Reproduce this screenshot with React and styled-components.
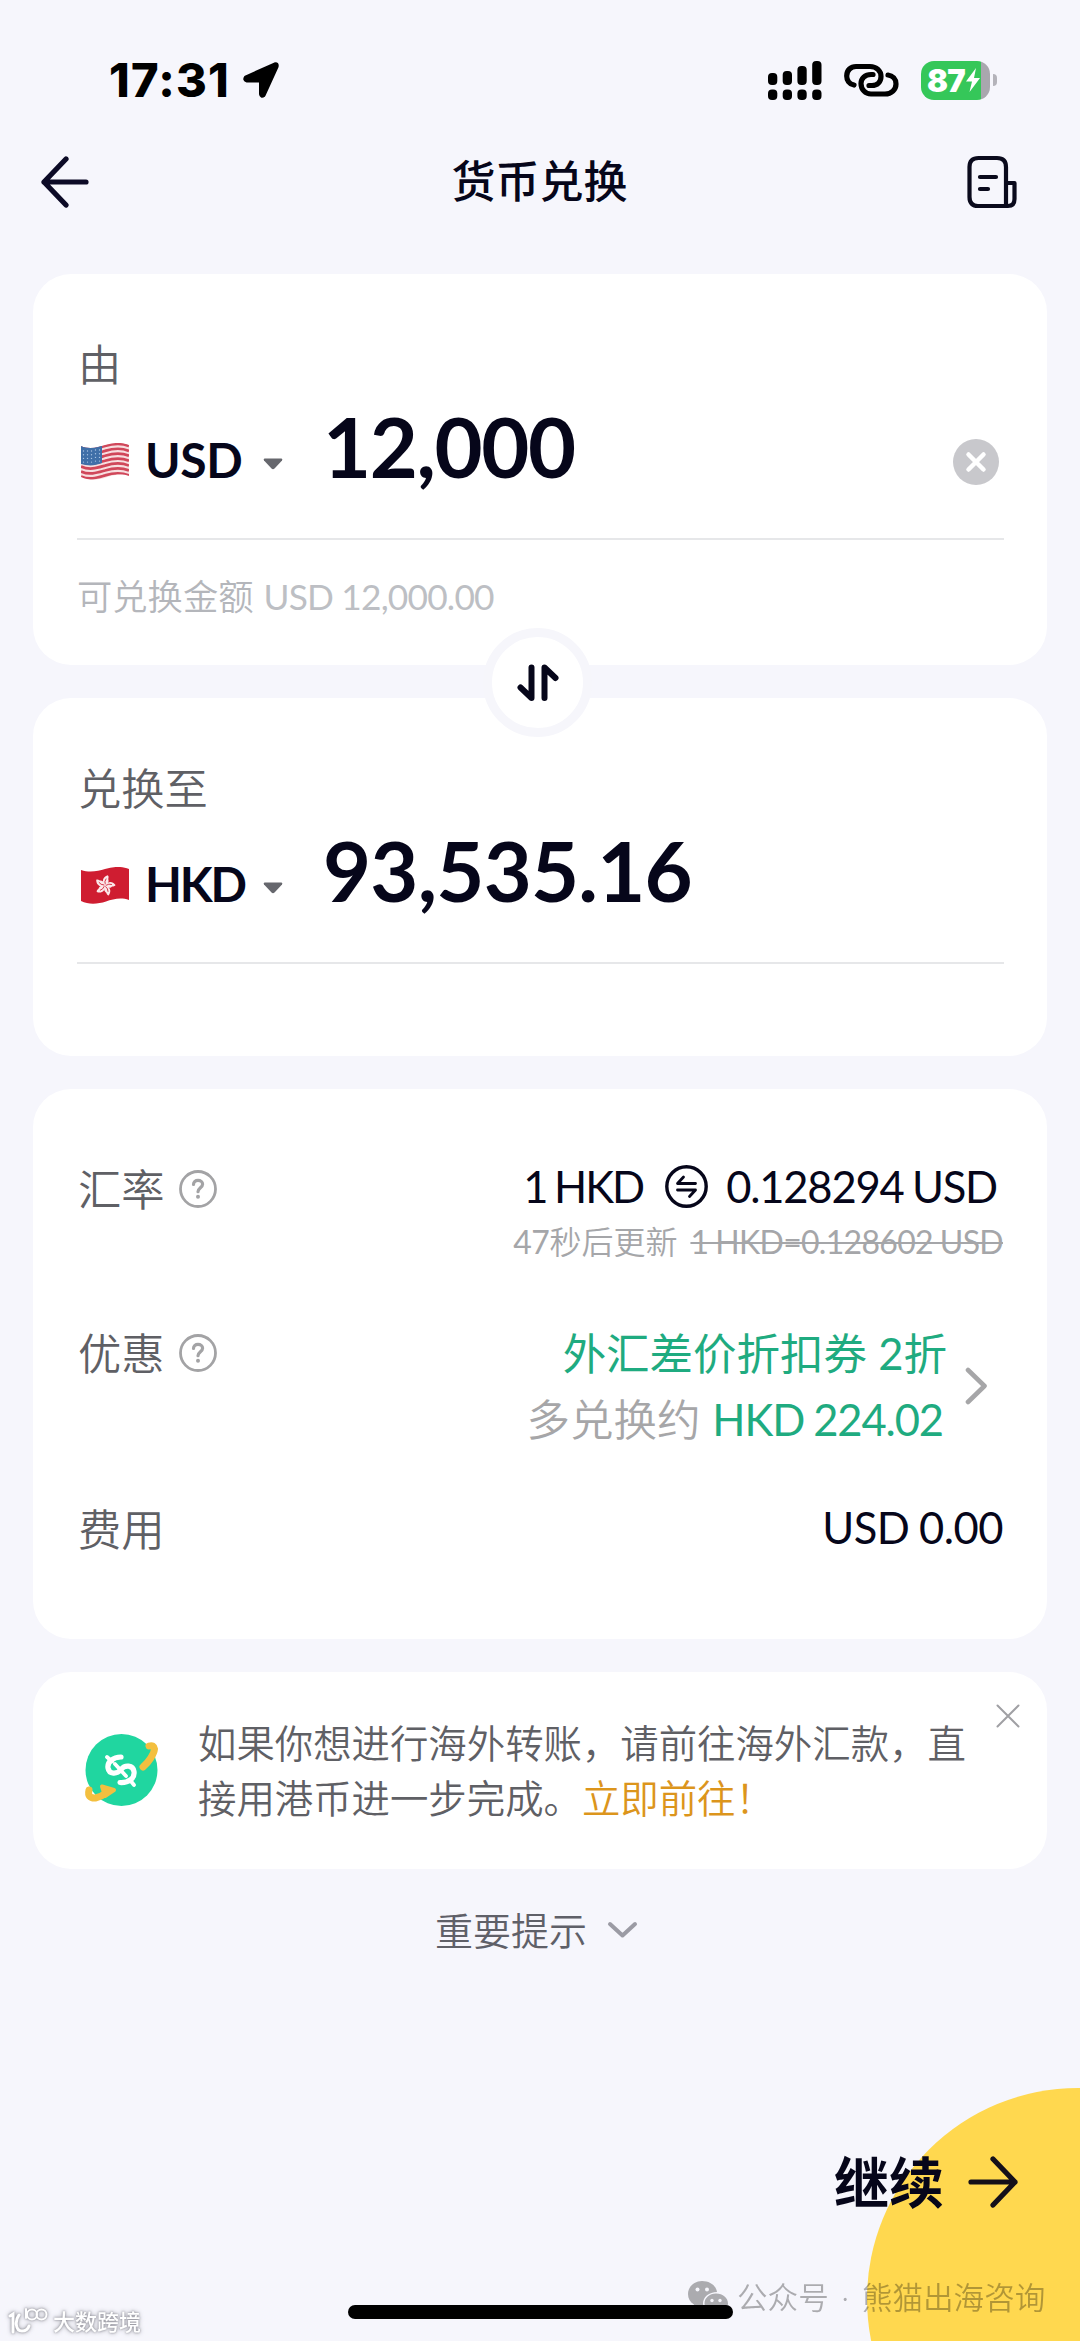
import React from 'react'
import styled, { createGlobalStyle } from 'styled-components'

const GlobalStyle = createGlobalStyle`
  * {
    box-sizing: border-box;
  }
  body {
    margin: 0;
    background: #f6f6fc;
    font-family: Lato, "Noto Sans CJK SC", sans-serif;
    color: #06061a;
  }
  svg {
    display: block;
    flex: none;
  }
`

const Screen = styled.div`
  position: relative;
  display: flex;
  flex-direction: column;
  width: 1080px;
  height: 2341px;
  overflow: hidden;
  background: #f6f6fc;
`

const StatusBar = styled.div`
  display: flex;
  align-items: center;
  height: 110px;
  padding: 50px 83px 0 109px;
`

const Clock = styled.span`
  width: 132px;
  font-family: Inter, sans-serif;
  font-size: 47px;
  font-weight: 800;
  line-height: 60px;
  letter-spacing: 1.2px;
  color: #000;
`

const StatusIcons = styled.div`
  display: flex;
  align-items: center;
  gap: 22px;
  margin-left: auto;
`

const Battery = styled.div`
  display: flex;
  align-items: center;
  gap: 3px;
`

const BatteryBody = styled.div`
  display: flex;
  align-items: center;
  width: 69px;
  height: 39px;
  padding-left: 6px;
  border-radius: 13px;
  background: linear-gradient(to right, #35c759 87%, #a9a7ae 87%);
  font-family: Inter, sans-serif;
  font-size: 31px;
  font-weight: 900;
  letter-spacing: -0.7px;
  color: #fff;
`

const BatteryTip = styled.div`
  width: 4px;
  height: 12px;
  border-radius: 0 6px 6px 0;
  background: #b4b3ba;
`

const Header = styled.div`
  display: flex;
  align-items: center;
  justify-content: space-between;
  height: 144px;
  padding: 0 62px 0 40px;
`

const Title = styled.h1`
  margin: 0 0 2px 23px;
  font-size: 44px;
  font-weight: 500;
  line-height: 60px;
`

const Cards = styled.div`
  position: relative;
  display: flex;
  flex-direction: column;
  gap: 33px;
  padding: 20px 33px 0;
`

const Card = styled.div`
  height: ${({ $height }) => $height}px;
  padding: ${({ $top }) => $top}px 43px 0 44px;
  border-radius: 38px;
  background: #fff;
`

const Label = styled.div`
  display: flex;
  align-items: center;
  gap: 14px;
  padding-left: 1px;
  font-size: 43.3px;
  font-weight: 350;
  line-height: ${({ $line }) => $line || 60}px;
  color: #5f6065;
`

const AmountRow = styled.div`
  display: flex;
  align-items: baseline;
  height: 146px;
  padding: 0 5px 0 4px;
  border-bottom: 2px solid #e6e7e9;
`

const Pinned = styled.div`
  align-self: flex-start;
  margin-top: ${({ $top }) => $top}px;
  margin-left: ${({ $push }) => ($push ? 'auto' : 0)};
`

const Currency = styled.span`
  width: 134px;
  padding-left: 16px;
  font-size: 48px;
  font-weight: 700;
  letter-spacing: ${({ $spacing }) => $spacing}px;
`

const Amount = styled.span`
  margin-left: 40px;
  font-size: 83px;
  font-weight: 700;
  line-height: 104px;
  letter-spacing: ${({ $spacing }) => $spacing}px;
`

const Hint = styled.div`
  display: flex;
  gap: 10px;
  margin-top: 27px;
  font-size: 35.3px;
  font-weight: 350;
  line-height: 60px;
  color: #b4b6bb;
`

const HintAmount = styled.span`
  font-weight: 400;
  letter-spacing: -0.8px;
  color: #bdbfc4;
`

const SwapButton = styled.button`
  position: absolute;
  top: 374px;
  left: 483px;
  display: flex;
  align-items: center;
  justify-content: center;
  width: 109px;
  height: 109px;
  padding: 0;
  border: 9px solid #f6f6fb;
  border-radius: 50%;
  background: #fff;
`

const DetailRow = styled.div`
  display: flex;
  align-items: flex-start;
  justify-content: space-between;
  height: ${({ $height }) => $height}px;
`

const Values = styled.div`
  display: flex;
  flex-direction: column;
  align-items: flex-end;
`

const Value = styled.div`
  display: flex;
  align-items: center;
  gap: ${({ $gap }) => $gap || 0}px;
  padding-right: ${({ $right }) => $right || 0}px;
  font-size: 43.5px;
  line-height: ${({ $line }) => $line || 60}px;
  letter-spacing: ${({ $spacing }) => $spacing || 0}px;
  word-spacing: ${({ $word }) => $word || 0}px;
  white-space: pre;
  color: ${({ $color }) => $color || '#06061a'};
`

const RateBase = styled.span`
  margin-right: 4px;
  letter-spacing: -2px;
`

const Refresh = styled.div`
  display: flex;
  gap: 13px;
  padding-right: 1px;
  font-size: 32px;
  line-height: 52px;
  color: #a5a6a9;
`

const Countdown = styled.span`
  font-weight: 350;
`

const Seconds = styled.span`
  font-weight: 400;
  letter-spacing: -0.5px;
`

const OldRate = styled.s`
  letter-spacing: -0.7px;
  word-spacing: -0.5px;
  text-decoration-thickness: 2px;
`

const Muted = styled.span`
  font-weight: 350;
  letter-spacing: 0;
  word-spacing: 0;
  color: #a6a6a8;
`

const Discount = styled.div`
  display: flex;
  align-items: center;
  gap: 18px;
  padding-right: 16px;
`

const Notice = styled(Card)`
  display: flex;
  padding: 0 27px 0 50px;
`

const NoticeText = styled.div`
  width: 780px;
  margin: 44px 0 0 37px;
  font-size: 38.4px;
  font-weight: 350;
  line-height: 55px;
  color: #5f6065;
`

const NoticeLine = styled.div`
  display: flex;
`

const NoticeLink = styled.span`
  color: #dc951c;
`

const Tips = styled.div`
  display: flex;
  align-items: center;
  justify-content: center;
  gap: 20px;
  height: 60px;
  margin-top: 31px;
  padding-right: 7px;
  font-size: 38px;
  font-weight: 350;
  line-height: 60px;
  color: #5f6068;
`

const Corner = styled.div`
  position: absolute;
  top: 2088px;
  left: 867px;
  width: 422px;
  height: 422px;
  border-radius: 50%;
  background: #ffd84f;
`

const Footer = styled.div`
  position: relative;
  display: flex;
  align-items: center;
  justify-content: flex-end;
  gap: 24px;
  height: 70px;
  margin-top: 187px;
  padding-right: 62px;
  font-size: 55px;
  font-weight: 700;
  line-height: 70px;
`

const HomeIndicator = styled.div`
  position: absolute;
  left: 348px;
  bottom: 22px;
  width: 385px;
  height: 14px;
  border-radius: 7px;
  background: #000;
`

const Account = styled.div`
  position: absolute;
  top: 2276px;
  left: 687px;
  display: flex;
  align-items: center;
  gap: 8px;
  font-size: 30.6px;
  font-weight: 350;
  line-height: 44px;
  word-spacing: 4.5px;
  color: #000;
  opacity: 0.3;
  white-space: pre;
`

const Brand = styled.div`
  position: absolute;
  top: 2307px;
  left: 8px;
  display: flex;
  align-items: center;
  gap: 4px;
  font-size: 22px;
  font-weight: 500;
  line-height: 30px;
  color: #fff;
  filter: drop-shadow(0 0 1px #8e8e96) drop-shadow(0 0 2px #b4b4bc);
`

const LocationIcon = () => (
  <svg width="40" height="40" viewBox="0 0 40 40">
    <path d="M4.500 17 L33.500 4 Q37 3 36 7 L23 35.500 Q20 37.500 19.500 34 V21 H6 Q2.500 20 4.500 17Z" fill="#000" stroke="#000" strokeWidth="3" strokeLinejoin="round" />
  </svg>
)

const SignalIcon = () => (
  <svg width="54" height="39" viewBox="0 0 54 39">
    <rect x="0" y="12" width="9.300" height="12" rx="4" />
    <rect x="14.700" y="10" width="9.300" height="14" rx="4" />
    <rect x="29.400" y="5" width="9.300" height="19" rx="4" />
    <rect x="44.200" y="0" width="9.300" height="24" rx="4" />
    {[0, 14.7, 29.4, 44.2].map((x) => (
      <rect key={x} x={x} y="28.500" width="9.300" height="10.500" rx="4" />
    ))}
  </svg>
)

const HotspotIcon = () => (
  <svg width="55" height="34" viewBox="0 0 55 34" fill="none" stroke="#000" strokeWidth="5.200" strokeLinecap="round">
    <path d="M10 22 C5 21 2.700 17 2.700 13 C2.700 7 7 3.500 12 3.500 H26 C32.500 3.500 37 8 37 13.500 C37 19 33 22.500 28 22.500 H25" />
    <path d="M29 11.500 H27 C21 11.500 17 15.500 17 20.500 C17 26.500 21.500 31 27 31 H41 C47.500 31 52 26.500 52 21 C52 16 48.500 12.500 44 12" />
  </svg>
)

const BoltIcon = () => (
  <svg width="16" height="26" viewBox="0 0 16 26">
    <path d="M11 1 L1 14.500 H7 L4.500 25 L15 11 H9Z" fill="#fff" />
  </svg>
)

const ArrowIcon = ({ flip }) => (
  <svg width="50" height="52" viewBox="0 0 50 52" fill="none" stroke={flip ? '#15101a' : '#0c0a26'} strokeWidth="5.200" strokeLinecap="round" strokeLinejoin="round">
    <path d={flip ? 'M3 26 H47 M25 3 L47 26 L25 49' : 'M46 26 H4 M26 3 L4 26 L26 49'} />
  </svg>
)

const RecordsIcon = () => (
  <svg width="52" height="54" viewBox="0 0 52 54" fill="none" stroke="#0a0a1c" strokeWidth="4.200" strokeLinecap="round" strokeLinejoin="round">
    <path d="M41 51 H12 Q3.500 51 3.500 42 V12 Q3.500 3 12.500 3 H31 Q40 3 40 12 V51 H42 Q48.500 51 48.500 44 V28 H40" />
    <path d="M14 22 H30 M14 34 H22" />
  </svg>
)

const UsFlag = () => (
  <svg width="48" height="37" viewBox="0 0 48 37">
    <defs>
      <clipPath id="wave">
        <path d="M0 3 C9 7 17 4 24 2 C32 -.500 41 -1 48 2 V33 C40 30 32 32 25 34.500 C17 37 8 38 0 34Z" />
      </clipPath>
    </defs>
    <g clipPath="url(#wave)">
      <rect width="48" height="37" fill="#f7dfe0" />
      {[0, 1, 2, 3, 4, 5, 6].map((i) => (
        <path
          key={i}
          d={`M0 ${4 + i * 4.9} C9 ${8 + i * 4.9} 17 ${5 + i * 4.9} 24 ${3 + i * 4.9} C32 ${0.5 + i * 4.9} 41 ${i * 4.9} 48 ${3 + i * 4.9}`}
          fill="none"
          stroke="#d0475a"
          strokeWidth="2.700"
        />
      ))}
      <path d="M0 0 H21 V20 C14 23 7 23 0 21Z" fill="#3f6fa8" />
      {[0, 1, 2, 3].map((r) => [0, 1, 2, 3, 4].map((c) => (
        <circle key={`${r}-${c}`} cx={2.5 + c * 4} cy={8 + r * 3.7 - (c > 2 ? 1 : 0)} r=".700" fill="#a9c4e2" />
      )))}
    </g>
  </svg>
)

const HkFlag = () => (
  <svg width="48" height="37" viewBox="0 0 48 37">
    <path d="M0 3 C9 6 17 4 24 2 C32 -.500 41 -1 48 2 V33 C40 30 32 32 25 34.500 C17 37 8 38 0 34Z" fill="#cf1d31" />
    {[10, 82, 154, 226, 298].map((a) => (
      <g key={a} transform={`translate(24 18.500) rotate(${a})`}>
        <path d="M0 0 C-4 -3 -4 -8 1 -10.500 C3 -9 1.500 -7.500 2.500 -6 C3.500 -4 2 -1.500 0 0Z" fill="#fbe9ea" />
        <path d="M0 -1 Q-1.500 -4 0 -7" fill="none" stroke="#cf1d31" strokeWidth=".800" />
      </g>
    ))}
  </svg>
)

const CaretIcon = () => (
  <svg width="20" height="12" viewBox="0 0 20 12">
    <path d="M1.500 .500 H18.500 Q20 1 19 2.500 L11.500 10.500 Q10 12 8.500 10.500 L1 2.500 Q0 1 1.500 .500Z" fill="#66676d" />
  </svg>
)

const ClearIcon = () => (
  <svg width="46" height="46" viewBox="0 0 46 46">
    <circle cx="23" cy="23" r="23" fill="#c8c8cc" />
    <path d="M15.500 15.500 L30.500 30.500 M30.500 15.500 L15.500 30.500" stroke="#fff" strokeWidth="4.500" strokeLinecap="round" />
  </svg>
)

const SwapIcon = () => (
  <svg width="42" height="38" viewBox="0 0 42 38" fill="none" stroke="#06061a" strokeWidth="6" strokeLinecap="round" strokeLinejoin="round">
    <path d="M14.500 3.500 V34 L3.500 23.500 M27.500 34 V3.500 L38.500 14" />
  </svg>
)

const HelpIcon = () => (
  <svg width="38" height="38" viewBox="0 0 38 38" fill="none" stroke="#a3a3a5" strokeWidth="2.800" strokeLinecap="round">
    <circle cx="19" cy="19" r="17.500" />
    <path d="M14.500 14.500 C14.500 11.800 16.500 10.300 19 10.300 C21.500 10.300 23.600 11.900 23.600 14.300 C23.600 17.500 19 18 19 21.700" strokeWidth="3.200" />
    <circle cx="19" cy="26.700" r="2" fill="#a3a3a5" stroke="none" />
  </svg>
)

const RateIcon = () => (
  <svg width="43" height="43" viewBox="0 0 43 43" fill="none" stroke="#06061a" strokeWidth="3.400" strokeLinecap="round" strokeLinejoin="round">
    <circle cx="21.500" cy="21.500" r="19.700" />
    <path d="M30.500 18.500 H12.500 L18.500 12 M12.500 25 H30.500 L24.500 31.500" strokeWidth="2.800" />
  </svg>
)

const ChevronRight = () => (
  <svg width="23" height="38" viewBox="0 0 23 38">
    <path d="M3 3 L19.500 19 L3 35" fill="none" stroke="#a6a6a8" strokeWidth="4.600" strokeLinecap="round" strokeLinejoin="round" />
  </svg>
)

const ChevronDown = () => (
  <svg width="31" height="18" viewBox="0 0 31 18">
    <path d="M3 3 L15.500 14.500 L28 3" fill="none" stroke="#9b9ba4" strokeWidth="4" strokeLinecap="round" strokeLinejoin="round" />
  </svg>
)

const RemitIcon = () => (
  <svg width="78" height="76" viewBox="0 0 78 76" fill="none" strokeLinecap="round" strokeLinejoin="round">
    <circle cx="38.500" cy="38" r="36" fill="#20d6a0" />
    <path d="M60 35 C66 30 71 22 71.500 17 Q71 12.500 66 14" stroke="#f3bf3f" strokeWidth="7" />
    <path d="M6 58 Q4 66.500 12.500 66 Q18 65 23 61" stroke="#f3bf3f" strokeWidth="7" />
    <path d="M19 54.500 L31 58 L22 64Z" fill="#f3bf3f" stroke="#f3bf3f" strokeWidth="4" />
    <g stroke="#fff" strokeWidth="5.200">
      <path d="M38 25 C30 25 24 30 25 36 C26 42.500 34 42.500 38 37.500 C42 32.500 50 33 51 39.500 C52 46 46 51 37 50.500" />
      <path d="M24 25 L29 29.500 M47 48 L51 53 M32 32 L43 44" strokeWidth="3.800" />
    </g>
  </svg>
)

const CloseIcon = () => (
  <svg width="24" height="24" viewBox="0 0 24 24">
    <path d="M1.500 1.500 L22.500 22.500 M22.500 1.500 L1.500 22.500" stroke="#a0a0a4" strokeWidth="2" strokeLinecap="round" />
  </svg>
)

const WechatIcon = () => (
  <svg width="42" height="36" viewBox="0 0 42 36">
    <path d="M15 1 C23 1 29 5.500 30 12 C22 12 16 17 16 23.500 L16.500 26.500 C14.500 26.800 12.500 26.500 10.500 26 L5.500 28.500 L7 24.500 C3 22 1 18.500 1 14 C1 7 7 1 15 1Z" />
    <path d="M29 13.500 C36 13.500 41 18 41 23.500 C41 27 39 30 36 32 L37 35 L33 33 C24 35 17.500 30 17.500 23.500 C17.500 18 22.500 13.500 29 13.500Z" />
    <g fill="#f6f6fc">
      <circle cx="10.500" cy="9.500" r="2" />
      <circle cx="20" cy="9.500" r="2" />
      <circle cx="25" cy="20.500" r="1.700" />
      <circle cx="33" cy="20.500" r="1.700" />
    </g>
  </svg>
)

const BrandIcon = () => (
  <svg width="41" height="30" viewBox="0 0 41 30" fill="none" stroke="#fff" strokeWidth="3" strokeLinecap="round">
    <path d="M2 9 L5 7 V25 M11 8 C7 13 7 24 14 24 C18 24 20 22 21 19" />
    <path d="M18 2 V11" strokeWidth="2" />
    <circle cx="24" cy="7.500" r="5" strokeWidth="2" />
    <circle cx="33.500" cy="7.500" r="5" strokeWidth="2" />
  </svg>
)

const MoneyCard = ({ height, label, flag, currency, currencySpacing, amount, amountSpacing, clearable, children }) => (
  <Card $height={height} $top={60}>
    <Label>{label}</Label>
    <AmountRow>
      <Pinned $top={49}>{flag}</Pinned>
      <Currency $spacing={currencySpacing}>{currency}</Currency>
      <Pinned $top={64}><CaretIcon /></Pinned>
      <Amount $spacing={amountSpacing}>{amount}</Amount>
      {clearable && <Pinned $top={45} $push><ClearIcon /></Pinned>}
    </AmountRow>
    {children}
  </Card>
)

const App = () => {
  return (
    <Screen>
      <GlobalStyle />
      <StatusBar>
        <Clock>17:31</Clock>
        <LocationIcon />
        <StatusIcons>
          <SignalIcon />
          <HotspotIcon />
          <Battery>
            <BatteryBody>87<BoltIcon /></BatteryBody>
            <BatteryTip />
          </Battery>
        </StatusIcons>
      </StatusBar>

      <Header>
        <ArrowIcon />
        <Title>货币兑换</Title>
        <RecordsIcon />
      </Header>

      <Cards>
        <MoneyCard
          height={391}
          label="由"
          flag={<UsFlag />}
          currency="USD"
          currencySpacing={-0.3}
          amount="12,000"
          amountSpacing={-1.4}
          clearable
        >
          <Hint>
            可兑换金额
            <HintAmount>USD 12,000.00</HintAmount>
          </Hint>
        </MoneyCard>
        <MoneyCard
          height={358}
          label="兑换至"
          flag={<HkFlag />}
          currency="HKD"
          currencySpacing={-2.2}
          amount="93,535.16"
          amountSpacing={-0.8}
        />
        <SwapButton><SwapIcon /></SwapButton>

        <Card $height={550} $top={67}>
          <DetailRow $height={164}>
            <Label $line={66}>汇率 <HelpIcon /></Label>
            <Values>
              <Value $right={7} $gap={18} $spacing={-1.2} $word={-1.5}>
                <RateBase>1 HKD</RateBase>
                <RateIcon />
                <span>0.128294 USD</span>
              </Value>
              <Refresh>
                <Countdown><Seconds>47</Seconds>秒后更新</Countdown>
                <OldRate>1 HKD=0.128602 USD</OldRate>
              </Refresh>
            </Values>
          </DetailRow>
          <DetailRow $height={176}>
            <Label $line={66}>优惠 <HelpIcon /></Label>
            <Discount>
              <Values>
                <Value $line={66} $color="#1fab80">外汇差价折扣券 2折</Value>
                <Value $line={66} $right={4} $spacing={-1.1} $word={-1} $color="#1fab80">
                  <Muted>多兑换约 </Muted>
                  <span>HKD 224.02</span>
                </Value>
              </Values>
              <ChevronRight />
            </Discount>
          </DetailRow>
          <DetailRow $height={66}>
            <Label $line={66}>费用</Label>
            <Value $line={62} $right={1} $spacing={-0.5} $word={-1}>USD 0.00</Value>
          </DetailRow>
        </Card>

        <Notice $height={197}>
          <Pinned $top={60}><RemitIcon /></Pinned>
          <NoticeText>
            <NoticeLine>如果你想进行海外转账，请前往海外汇款，直</NoticeLine>
            <NoticeLine>
              接用港币进一步完成。
              <NoticeLink>立即前往！</NoticeLink>
            </NoticeLine>
          </NoticeText>
          <Pinned $top={32} $push><CloseIcon /></Pinned>
        </Notice>
      </Cards>

      <Tips>重要提示 <ChevronDown /></Tips>

      <Corner />
      <Footer>继续 <ArrowIcon flip /></Footer>
      <Account><WechatIcon />公众号 · 熊猫出海咨询</Account>
      <HomeIndicator />
      <Brand><BrandIcon />大数跨境</Brand>
    </Screen>
  )
}

export default App
